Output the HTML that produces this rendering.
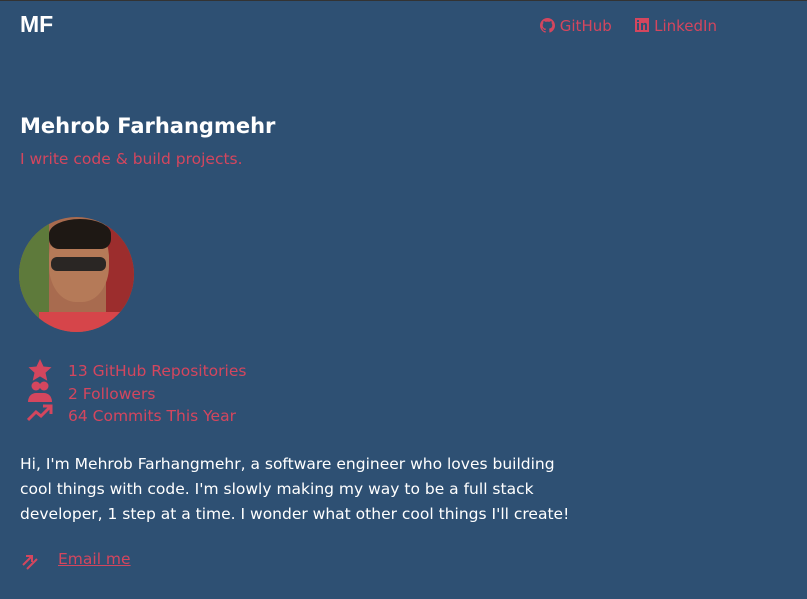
<!DOCTYPE html>
<html><head><style>
html,body{margin:0;padding:0;}
body{width:807px;height:599px;background:#2e5073;font-family:"DejaVu Sans","Liberation Sans",sans-serif;position:relative;overflow:hidden;border-top:1px solid #333;box-sizing:border-box;}
.a{position:absolute;white-space:nowrap;}
.red{color:#d4465e;}
</style></head><body>
<div class="a" style="left:20px;top:10px;font-size:23px;font-weight:bold;color:#fff;font-family:'Liberation Sans',sans-serif">MF</div>
<div class="a red" style="left:540px;top:16px;font-size:15px;">
<svg width="15" height="15" viewBox="0 0 16 16" style="vertical-align:-2px"><path fill="#d4465e" d="M8 0C3.6 0 0 3.6 0 8c0 3.5 2.3 6.5 5.5 7.6.4.1.5-.2.5-.4v-1.4c-2.2.5-2.7-1-2.7-1-.4-.9-.9-1.200-.9-1.2-.7-.5.1-.5.1-.5.8.1 1.2.8 1.2.8.7 1.3 1.9.9 2.3.7.1-.5.3-.9.5-1.100-1.8-.2-3.6-.9-3.6-4 0-.9.3-1.6.8-2.100-.1-.2-.4-1 .1-2.1 0 0 .7-.2 2.2.8.6-.2 1.3-.3 2-.3s1.4.1 2 .3c1.5-1 2.2-.8 2.2-.8.4 1.1.2 1.9.1 2.1.5.6.8 1.3.8 2.1 0 3.1-1.9 3.7-3.6 3.9.3.3.5.8.5 1.5v2.2c0 .2.1.5.6.4C13.7 14.5 16 11.5 16 8c0-4.400-3.6-8-8-8z"/></svg> GitHub
<span style="display:inline-block;width:14px"></span>
<svg width="14" height="14" viewBox="0 0 14 14" style="vertical-align:-1px"><rect width="14" height="14" fill="#d4465e"/><rect x="2" y="5" width="2" height="7" fill="#2e5073"/><rect x="2" y="2" width="2" height="2" fill="#2e5073"/><path d="M6 5h2v1c.5-.8 1.300-1.1 2-1.100 1.5 0 2 1 2 2.5V12h-2V7.5c0-.7-.3-1-.9-1S8 7 8 7.700V12H6z" fill="#2e5073"/></svg> LinkedIn</div>
<div class="a" style="left:20px;top:113px;font-size:21px;font-weight:bold;color:#fff">Mehrob Farhangmehr</div>
<div class="a red" style="left:20px;top:149px;font-size:15.5px">I write code &amp; build projects.</div>
<div class="a" style="left:19px;top:216px;width:115px;height:115px;border-radius:50%;overflow:hidden;background:#a86b4f">
<div style="position:absolute;left:0;top:0;width:30px;height:115px;background:#5e7a3b"></div>
<div style="position:absolute;right:0;top:0;width:28px;height:115px;background:#9c2d2d"></div>
<div style="position:absolute;left:30px;top:5px;width:60px;height:80px;border-radius:45%;background:#b57a58"></div>
<div style="position:absolute;left:30px;top:2px;width:62px;height:30px;border-radius:50% 50% 10px 10px;background:#1e1814"></div>
<div style="position:absolute;left:32px;top:40px;width:55px;height:14px;background:#2a2624;border-radius:6px"></div>
<div style="position:absolute;left:20px;top:95px;width:90px;height:30px;background:#d6454a"></div>
</div>
<svg class="a" style="left:27px;top:357px" width="26" height="66" viewBox="0 0 26 66">
<path fill="#d4465e" d="M13 1l3.5 7.5 8 .8-6 5.4 1.8 8-7.3-4.3-7.3 4.300 1.8-8-6-5.4 8-.8z"/>
<circle cx="9" cy="28" r="4.5" fill="#d4465e"/><circle cx="17" cy="28" r="4.5" fill="#d4465e"/>
<path fill="#d4465e" d="M1 44c0-6 4-9 8-9h8c4 0 8 3 8 9z"/>
<path d="M1 62l8-8 5 4 9-9" stroke="#d4465e" stroke-width="3" fill="none"/><path d="M16 48h8v8" stroke="#d4465e" stroke-width="3" fill="none"/>
</svg>
<div class="a red" style="left:68px;top:359px;font-size:15.5px;line-height:22.5px">13 GitHub Repositories<br>2 Followers<br>64 Commits This Year</div>
<div class="a" style="left:20px;top:451px;font-size:15.5px;line-height:25px;color:#fff">Hi, I'm Mehrob Farhangmehr, a software engineer who loves building<br>cool things with code. I'm slowly making my way to be a full stack<br>developer, 1 step at a time. I wonder what other cool things I'll create!</div>
<svg class="a" style="left:21px;top:553px" width="18" height="16" viewBox="0 0 18 16"><path d="M2 11L11 2M5 2h6v6M6 15l10-10" stroke="#d4465e" stroke-width="2" fill="none"/></svg>
<div class="a red" style="left:58px;top:549px;font-size:15.5px;text-decoration:underline">Email me</div>
</body></html>
